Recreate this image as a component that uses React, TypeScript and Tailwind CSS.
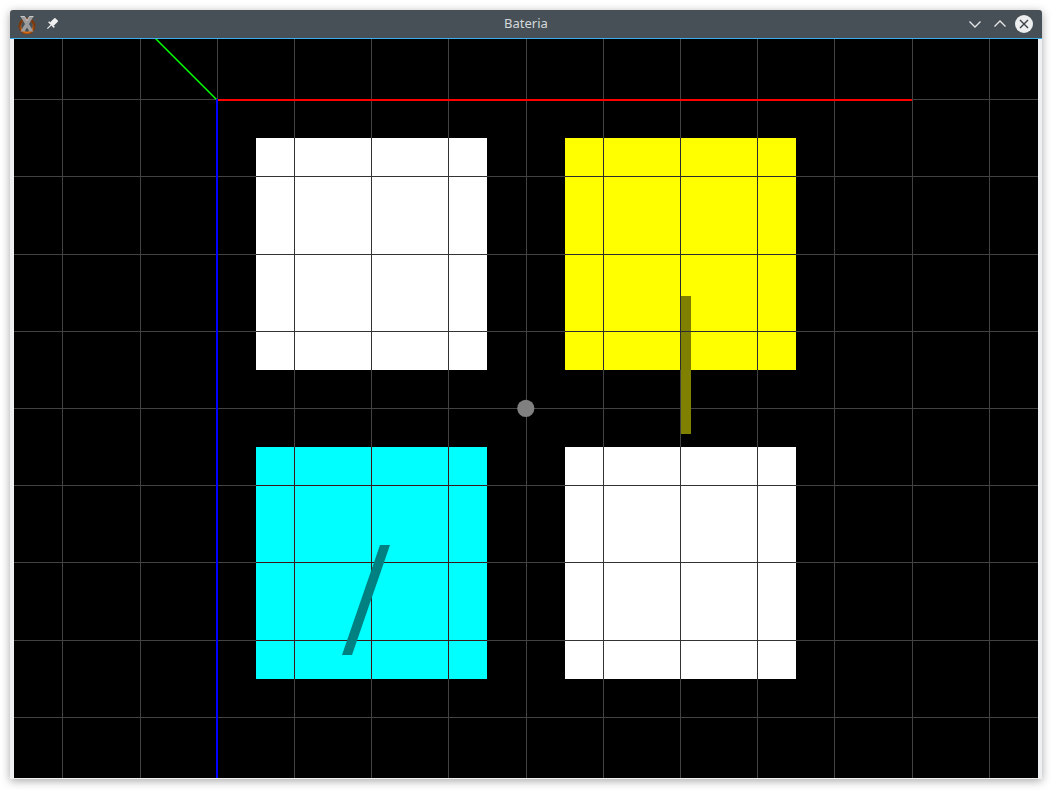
import React from "react";

const S = 77.2;
const CX = 525.5;
const CY = 408;

const xs = Array.from({ length: 13 }, (_, i) => Math.round(CX + (i - 6) * S) + 0.5);
const ys = Array.from({ length: 9 }, (_, i) => Math.round(CY + (i - 4) * S) + 0.5);

type Sq = { x0: number; y0: number; x1: number; y1: number; fill: string; line: string };

const squares: Sq[] = [
  { x0: 256, y0: 138, x1: 487, y1: 370, fill: "#ffffff", line: "#333333" },
  { x0: 565, y0: 138, x1: 796, y1: 370, fill: "#ffff00", line: "#2c2c30" },
  { x0: 256, y0: 447, x1: 487, y1: 679, fill: "#00ffff", line: "#3a1818" },
  { x0: 565, y0: 447, x1: 796, y1: 679, fill: "#ffffff", line: "#333333" },
];

function SquareLines({ s }: { s: Sq }) {
  return (
    <g stroke={s.line} strokeWidth={1}>
      {xs.filter((x) => x > s.x0 && x < s.x1).map((x) => (
        <line key={"v" + x} x1={x} y1={s.y0} x2={x} y2={s.y1} />
      ))}
      {ys.filter((y) => y > s.y0 && y < s.y1).map((y) => (
        <line key={"h" + y} x1={s.x0} y1={y} x2={s.x1} y2={y} />
      ))}
    </g>
  );
}

function Scene() {
  return (
    <svg width={1024} height={739} viewBox="14 39 1024 739" className="block">
      <rect x={14} y={39} width={1024} height={739} fill="#000" />
      <g stroke="#424242" strokeWidth={1}>
        {xs.map((x) => (
          <line key={"gx" + x} x1={x} y1={39} x2={x} y2={778} />
        ))}
        {ys.map((y) => (
          <line key={"gy" + y} x1={14} y1={y} x2={1038} y2={y} />
        ))}
      </g>
      {squares.map((s, i) => (
        <rect key={"s" + i} x={s.x0} y={s.y0} width={s.x1 - s.x0} height={s.y1 - s.y0} fill={s.fill} />
      ))}
      <rect x={681} y={296} width={10} height={138} fill="#808000" />
      <SquareLines s={squares[0]} />
      <SquareLines s={squares[1]} />
      <SquareLines s={squares[2]} />
      <SquareLines s={squares[3]} />
      <polygon points="380,545 390,545 352,655 342,655" fill="#008080" />
      <line x1={217} y1={100} x2={155} y2={38} stroke="#00ff00" strokeWidth={1.5} />
      <line x1={217} y1={100} x2={912} y2={100} stroke="#ff0000" strokeWidth={2} />
      <line x1={217} y1={99} x2={217} y2={778} stroke="#0000ff" strokeWidth={2} />
      <circle cx={525.8} cy={408.3} r={8.6} fill="#808080" />
    </svg>
  );
}

function AppIcon() {
  return (
    <svg width={20} height={20} viewBox="0 0 20 20">
      <defs>
        <radialGradient id="ring" cx="50%" cy="60%" r="50%">
          <stop offset="0%" stopColor="#ffd24a" />
          <stop offset="70%" stopColor="#e0701a" />
          <stop offset="100%" stopColor="#7a3a10" />
        </radialGradient>
      </defs>
      <circle cx={10} cy={12} r={7.2} fill="none" stroke="url(#ring)" strokeWidth={2.8} />
      <path d="M3.5 2.5 L7.5 2.5 L10 6.5 L12.5 2.5 L16.5 2.5 L12 10 L16.5 17.5 L12.5 17.5 L10 13.5 L7.5 17.5 L3.5 17.5 L8 10 Z" fill="#9c9c9c" />
      <path d="M3.5 2.5 L7.5 2.5 L10 6.5 L12.5 2.5 L16.5 2.5" fill="none" stroke="#dcdcdc" strokeWidth={0.8} />
    </svg>
  );
}

function PinIcon() {
  return (
    <svg width={14} height={14} viewBox="0 0 14 14">
      <g transform="rotate(45 7 7)">
        <rect x={4.5} y={0.5} width={5} height={7} rx={0.8} fill="#f0f0f0" />
        <rect x={3} y={7} width={8} height={1.5} fill="#f0f0f0" />
        <rect x={6.4} y={8.5} width={1.2} height={5} fill="#f0f0f0" />
      </g>
    </svg>
  );
}

export default function App() {
  return (
    <div className="w-[1058px] h-[794px] bg-white relative overflow-hidden" style={{ fontFamily: '"Noto Sans", "Open Sans", sans-serif' }}>
      <div className="absolute left-[10px] top-[10px] w-[1032px] h-[769px] flex flex-col rounded-t-[3px] shadow-[0_2px_10px_rgba(0,0,0,0.35)] bg-[#eff0f1]">
        <div className="h-[28px] bg-[#475057] rounded-t-[3px] flex items-center relative">
          <div className="flex items-center pl-[7px] gap-[8px]">
            <AppIcon />
            <PinIcon />
          </div>
          <div className="absolute inset-0 flex items-center justify-center text-[13px] text-[#d5d8db] pointer-events-none">
            Bateria
          </div>
          <div className="ml-auto flex items-center pr-[9px]">
            <svg width={14} height={14} viewBox="0 0 14 14" className="mr-[11px]">
              <path d="M1.5 4.5 L7 10 L12.5 4.5" fill="none" stroke="#e6e8ea" strokeWidth={1.3} />
            </svg>
            <svg width={14} height={14} viewBox="0 0 14 14" className="mr-[8px]">
              <path d="M1.5 9.5 L7 4 L12.5 9.5" fill="none" stroke="#e6e8ea" strokeWidth={1.3} />
            </svg>
            <div className="w-[18px] h-[18px] rounded-full bg-[#eceeef] flex items-center justify-center">
              <svg width={12} height={12} viewBox="0 0 12 12">
                <path d="M2 2 L10 10 M10 2 L2 10" stroke="#3b4045" strokeWidth={1.4} />
              </svg>
            </div>
          </div>
        </div>
        <div className="h-px bg-[#3daee9]" />
        <div className="flex px-[4px] pb-[1px]">
          <Scene />
        </div>
      </div>
    </div>
  );
}
